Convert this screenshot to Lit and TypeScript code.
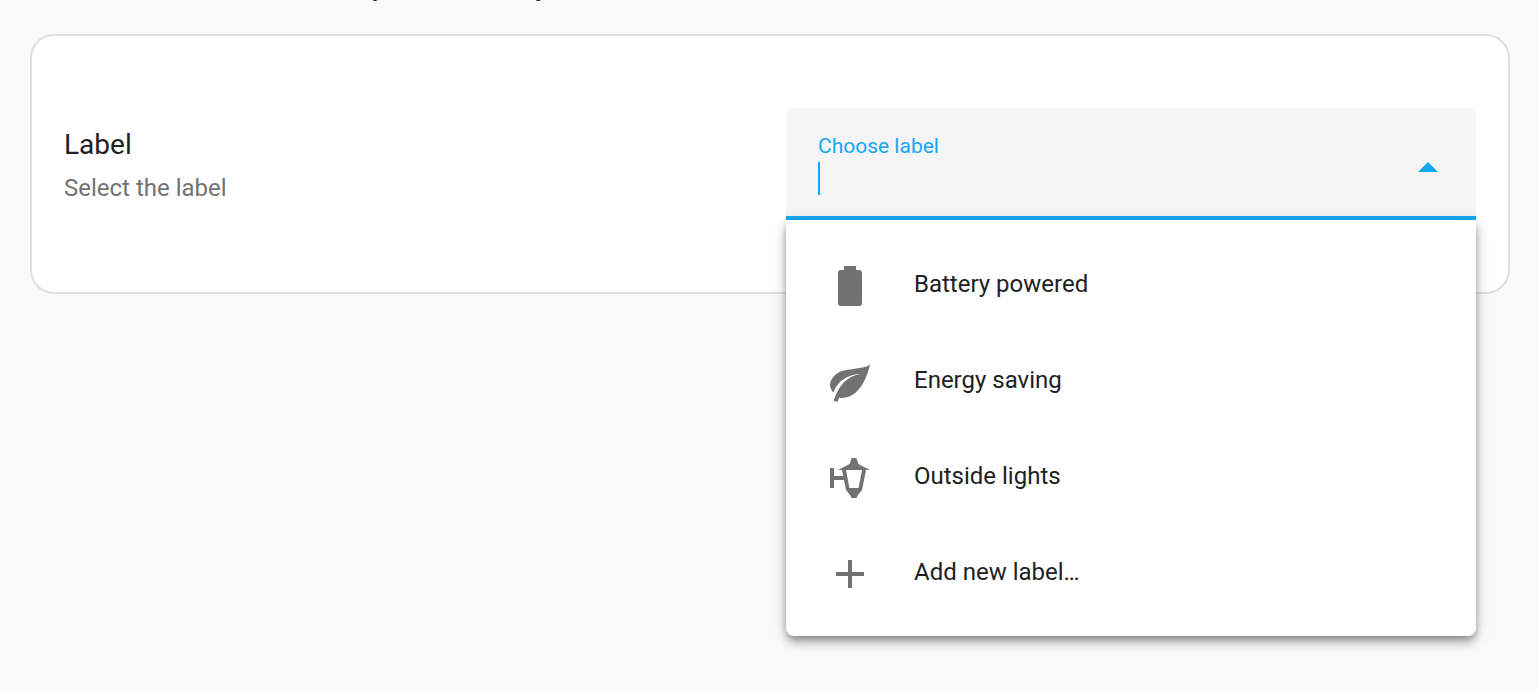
import { LitElement, html, css, svg } from "lit";
import { customElement, state } from "lit/decorators.js";

interface LabelOption {
  name: string;
  icon: string;
}

const OPTIONS: LabelOption[] = [
  {
    name: "Battery powered",
    icon: "M16.67,4H15V2H9V4H7.33A1.33,1.33 0 0,0 6,5.33V20.67C6,21.4 6.6,22 7.33,22H16.67A1.33,1.33 0 0,0 18,20.67V5.33C18,4.6 17.4,4 16.67,4Z",
  },
  {
    name: "Energy saving",
    icon: "M17,8C8,10 5.9,16.17 3.82,21.34L5.71,22L6.66,19.7C7.14,19.87 7.64,20 8,20C19,20 22,3 22,3C21,5 14,5.25 9,6.25C4,7.25 2,11.5 2,13.5C2,15.5 3.75,17.25 3.75,17.25C7,8 17,8 17,8Z",
  },
  {
    name: "Outside lights",
    icon: "M12.8,2H15.2L16.2,5L20,7L22,7.8L20,8L18,18L16,20.5L15.2,22H12.8L12,20.5L10,18L9,13H4V17H2V7H4V11H8.6L8,8L6,7.8L8,7L11.8,5ZM10,8L11.7,17H16.3L18,8Z",
  },
  { name: "Add new label…", icon: "M19,13H13V19H11V13H5V11H11V5H13V11H19V13Z" },
];

@customElement("label-picker")
export class LabelPicker extends LitElement {
  @state() private open = true;

  static styles = css`
    :host {
      display: block;
      position: relative;
    }
    .field {
      display: flex;
      align-items: center;
      box-sizing: border-box;
      padding: 22px 24px 20px 32px;
      border-bottom: 4px solid #14a8f4;
      border-radius: 8px 8px 0 0;
      background: #f5f5f5;
    }
    .entry {
      flex: 1;
      min-width: 0;
    }
    .caption {
      display: block;
      font-size: 21px;
      line-height: 32px;
      color: #14a8f4;
    }
    .input-row {
      display: flex;
      height: 34px;
      align-items: flex-start;
    }
    .caret {
      width: 2px;
      height: 33px;
      background: #14a8f4;
    }
    input {
      flex: 1;
      min-width: 0;
      height: 33px;
      padding: 0;
      border: 0;
      outline: 0;
      background: none;
      color: #212121;
      caret-color: transparent;
      font: inherit;
    }
    .toggle {
      display: flex;
      padding: 6px 0 0;
      border: 0;
      background: none;
      color: #14a8f4;
      cursor: pointer;
    }
    svg {
      display: block;
      width: 48px;
      height: 48px;
      fill: currentColor;
    }
    .menu {
      position: absolute;
      top: 100%;
      left: 0;
      right: 0;
      padding: 16px 0;
      border-radius: 0 0 8px 8px;
      background: #fff;
      box-shadow:
        0 8px 10px 0 rgba(0, 0, 0, 0.14),
        0 2px 20px 0 rgba(0, 0, 0, 0.12),
        0 4px 8px -2px rgba(0, 0, 0, 0.4);
    }
    .option {
      display: flex;
      align-items: center;
      gap: 40px;
      width: 100%;
      height: 96px;
      padding: 0 40px;
      border: 0;
      background: none;
      color: #212121;
      font: inherit;
      font-size: 24px;
      line-height: 32px;
      text-align: left;
      cursor: pointer;
    }
    .icon {
      padding-top: 4px;
      color: #727272;
    }
  `;

  private toggle() {
    this.open = !this.open;
  }

  render() {
    return html`
      <div class="field">
        <div class="entry">
          <label class="caption" for="label">Choose label</label>
          <div class="input-row">
            <span class="caret"></span>
            <input id="label" type="text" role="combobox" aria-controls="options" aria-expanded=${this.open} autocomplete="off" />
          </div>
        </div>
        <button class="toggle" type="button" aria-label="Toggle" @click=${this.toggle}>
          <svg viewBox="0 0 24 24" aria-hidden="true">
            ${this.open ? svg`<path d="M7,15L12,10L17,15H7Z" />` : svg`<path d="M7,10L12,15L17,10H7Z" />`}
          </svg>
        </button>
      </div>
      ${this.open
        ? html`<div class="menu" id="options" role="listbox">
            ${OPTIONS.map(
              (option) => html`<button class="option" type="button" role="option">
                <span class="icon">
                  <svg viewBox="0 0 24 24" aria-hidden="true"><path fill-rule="evenodd" d=${option.icon} /></svg>
                </span>
                <span>${option.name}</span>
              </button>`
            )}
          </div>`
        : null}
    `;
  }
}

@customElement("app-root")
export class AppRoot extends LitElement {
  static styles = css`
    :host {
      display: block;
      box-sizing: border-box;
      min-height: 100vh;
      padding: 0 28px 0 30px;
      background: #fafafa;
      color: #212121;
      font-family: Roboto, sans-serif;
    }
    .scrolled {
      display: flex;
      align-items: flex-end;
      gap: 150px;
      height: 1px;
      margin: 0 0 33px;
      padding-left: 342px;
      overflow: hidden;
      font-size: 28px;
      line-height: 30px;
    }
    .card {
      display: grid;
      grid-template-columns: 1fr 1fr;
      align-items: center;
      gap: 32px;
      padding: 72px 32px;
      border: 2px solid #e0e0e0;
      border-radius: 24px;
      background: #fff;
    }
    .text {
      padding-top: 4px;
    }
    .heading {
      margin: 0;
      font-size: 28px;
      font-weight: 400;
      line-height: 44px;
    }
    .description {
      margin: 0;
      font-size: 24px;
      line-height: 42px;
      color: #727272;
    }
  `;

  render() {
    return html`
      <p class="scrolled"><span>y</span><span>y</span></p>
      <section class="card">
        <div class="text">
          <h2 class="heading">Label</h2>
          <p class="description">Select the label</p>
        </div>
        <label-picker></label-picker>
      </section>
    `;
  }
}
